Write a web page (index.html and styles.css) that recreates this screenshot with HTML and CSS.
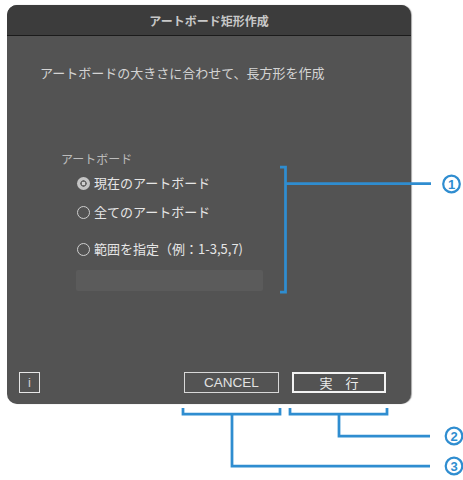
FILE: index.html
```html
<!DOCTYPE html>
<html lang="ja">
<head>
<meta charset="utf-8">
<title>アートボード矩形作成</title>
<link rel="stylesheet" href="styles.css">
</head>
<body>
<div class="page">
  <div class="dialog">
    <div class="titlebar">アートボード矩形作成</div>
    <div class="content">
      <div class="subtitle">アートボードの大きさに合わせて、長方形を作成</div>
      <div class="group">
        <div class="group-label">アートボード</div>
        <div class="radio radio-first"><span class="dot dot-on"></span><span>現在のアートボード</span></div>
        <div class="radio radio-second"><span class="dot"></span><span>全てのアートボード</span></div>
        <div class="radio radio-third"><span class="dot"></span><span>範囲を指定（例：1-3,5,7)</span></div>
        <div class="range-input"></div>
      </div>
      <div class="footer">
        <div class="btn btn-info">i</div>
        <div class="btn btn-cancel">CANCEL</div>
        <div class="btn btn-ok">実　行</div>
      </div>
    </div>
  </div>
  <svg class="annot" width="463" height="480" viewBox="0 0 463 480">
    <g fill="none" stroke="#2f8dd0" stroke-width="2.75">
      <path d="M280 167 H285.5 V292 H280"/>
      <path d="M285.5 183.5 H431"/>
      <path d="M183 408 V414 H280 V408"/>
      <path d="M290 408 V414 H387 V408"/>
      <path d="M232 414 V466 H430"/>
      <path d="M339 414 V436 H430"/>
      <circle cx="451.5" cy="184" r="8.3" stroke-width="2.2"/>
      <circle cx="454" cy="436" r="8.3" stroke-width="2.2"/>
      <circle cx="454" cy="466" r="8.3" stroke-width="2.2"/>
    </g>
    <g class="num" fill="#2f8dd0" text-anchor="middle">
      <text x="451.5" y="188.8">1</text>
      <text x="454" y="440.8">2</text>
      <text x="454" y="470.8">3</text>
    </g>
  </svg>
</div>
</body>
</html>
```
FILE: styles.css
```css
html, body {
  margin: 0;
  padding: 0;
  background: #ffffff;
}
body {
  font-family: "Noto Sans CJK JP", "Noto Sans", "Liberation Sans", sans-serif;
}
.page {
  position: relative;
  width: 463px;
  height: 480px;
  overflow: hidden;
}
.dialog {
  margin: 5px 0 0 7px;
  width: 404px;
  height: 399px;
  border-radius: 10px;
  background: #535353;
  overflow: hidden;
  display: flex;
  flex-direction: column;
  box-shadow: 1px 0 1px rgba(0, 0, 0, 0.35);
}
.titlebar {
  height: 30px;
  flex: none;
  background: #3c3c3c;
  border-bottom: 1px solid #1b1b1b;
  display: flex;
  align-items: center;
  justify-content: center;
  font-size: 12px;
  font-weight: bold;
  color: #c8c8c8;
}
.content {
  flex: 1;
  display: flex;
  flex-direction: column;
  padding: 28px 0 11px 33px;
}
.subtitle {
  font-size: 13px;
  line-height: 18px;
  color: #d4d4d4;
}
.group {
  margin-top: 68px;
  padding-left: 21px;
  display: flex;
  flex-direction: column;
}
.group-label {
  font-size: 12px;
  line-height: 18px;
  color: #bcbcbc;
}
.radio {
  display: flex;
  align-items: center;
  gap: 4px;
  margin-left: 16px;
  font-size: 13px;
  line-height: 18px;
  color: #e6e6e6;
}
.radio-first { margin-top: 6px; }
.radio-second { margin-top: 11px; }
.radio-third { margin-top: 19px; }
.dot {
  width: 13px;
  height: 13px;
  box-sizing: border-box;
  border: 1.5px solid #cfcfcf;
  border-radius: 50%;
  flex: none;
}
.dot-on {
  border: none;
  background: radial-gradient(circle, #d0d0d0 0 1.5px, #6a6a6a 1.8px 3px, #c4c4c4 3.4px);
}
.range-input {
  margin: 12px 0 0 15px;
  width: 187px;
  height: 21px;
  border-radius: 2px;
  background: #5b5b5b;
}
.footer {
  margin-top: auto;
  margin-left: -21px;
  display: flex;
  align-items: center;
}
.btn {
  box-sizing: border-box;
  height: 21px;
  display: flex;
  align-items: center;
  justify-content: center;
  color: #e2e2e2;
}
.btn-info {
  width: 21px;
  border: 1px solid #e6e6e6;
  font-family: "Liberation Sans", sans-serif;
  font-size: 13px;
  color: #cfcfcf;
}
.btn-cancel {
  margin-left: 144px;
  width: 95px;
  border: 1.5px solid #d8d8d8;
  font-family: "Liberation Sans", sans-serif;
  font-size: 13.5px;
}
.btn-ok {
  margin-left: 13px;
  width: 94px;
  border: 2px solid #f2f2f2;
  font-size: 13px;
  color: #ececec;
}
.annot {
  position: absolute;
  left: 0;
  top: 0;
  pointer-events: none;
}
.num text {
  font-family: "Liberation Sans", "DejaVu Sans", sans-serif;
  font-weight: bold;
  font-size: 13px;
}
```
